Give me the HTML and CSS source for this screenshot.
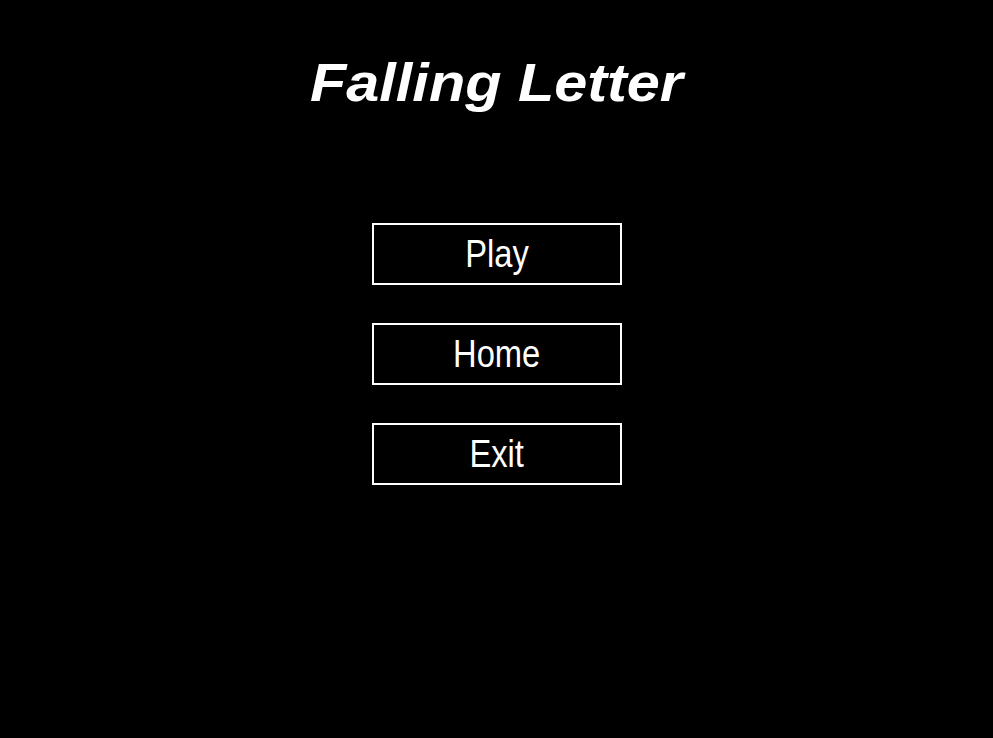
FILE: index.html
```html
<!DOCTYPE html>
<html>
<head>
<meta charset="utf-8">
<link rel="stylesheet" href="styles.css">
</head>
<body>
<main class="screen">
  <h1 class="title"><span class="title-text">Falling Letter</span></h1>
  <nav class="menu">
    <button class="btn"><span class="btn-text">Play</span></button>
    <button class="btn"><span class="btn-text">Home</span></button>
    <button class="btn"><span class="btn-text">Exit</span></button>
  </nav>
</main>
</body>
</html>
```
FILE: styles.css
```css
html, body {
  margin: 0;
  padding: 0;
  background: #000;
  width: 993px;
  height: 738px;
  overflow: hidden;
}
.screen {
  display: flex;
  flex-direction: column;
  align-items: center;
  font-family: "Liberation Sans", Arial, sans-serif;
  color: #fff;
}
.title {
  margin: 52px 0 0 0;
  height: 60px;
  line-height: 60px;
  font-size: 54px;
  font-weight: bold;
  font-style: italic;
}
.title-text {
  display: inline-block;
  transform: scaleX(1.1);
}
.menu {
  margin-top: 111px;
  display: flex;
  flex-direction: column;
  gap: 38px;
}
.btn {
  width: 250px;
  height: 62px;
  box-sizing: border-box;
  border: 2px solid #fff;
  background: #000;
  color: #fff;
  padding: 0;
  font-family: "Liberation Sans", Arial, sans-serif;
  font-size: 38px;
  line-height: 58px;
  text-align: center;
}
.btn-text {
  display: inline-block;
  transform: scaleX(0.86);
}
```
